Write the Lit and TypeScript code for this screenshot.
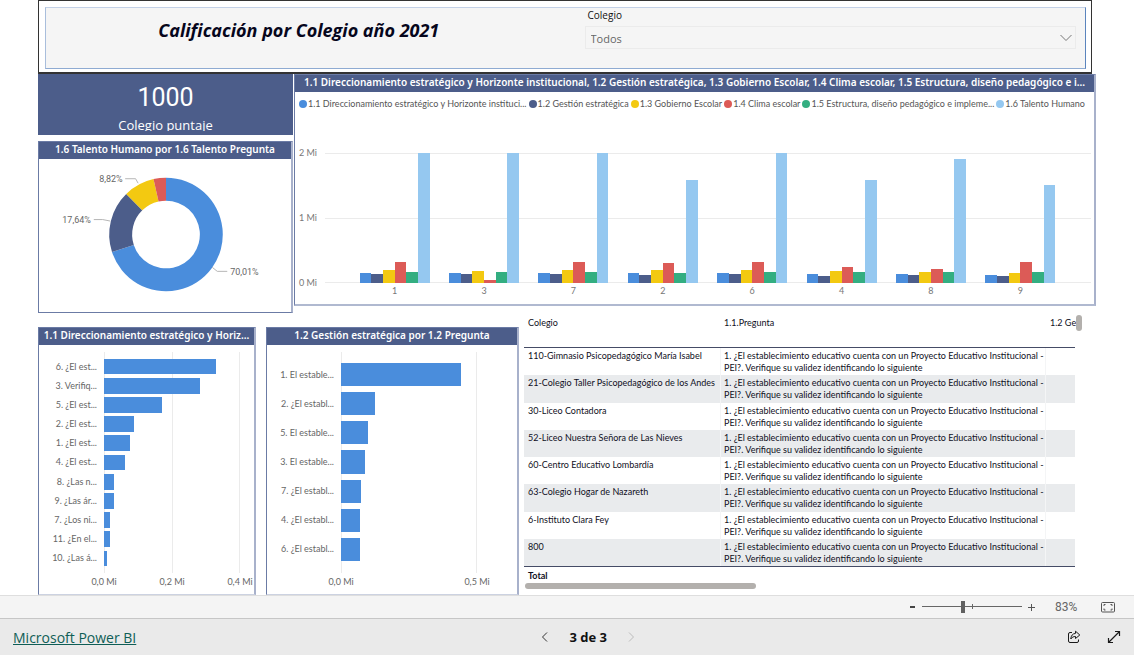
import { LitElement, html, css, svg } from "lit";
import { customElement } from "lit/decorators.js";

const SERIES = [
  { name: "1.1 Direccionamiento estratégico y Horizonte instituci...", color: "#4a8ddc" },
  { name: "1.2 Gestión estratégica", color: "#4c5d8a" },
  { name: "1.3 Gobierno Escolar", color: "#f3c911" },
  { name: "1.4 Clima escolar", color: "#dc5b57" },
  { name: "1.5 Estructura, diseño pedagógico e impleme...", color: "#33ae81" },
  { name: "1.6 Talento Humano", color: "#95c8f0" },
];

const GROUPS = [
  { label: "1", values: [0.15, 0.132, 0.197, 0.326, 0.171, 2.01] },
  { label: "3", values: [0.15, 0.132, 0.191, 0.047, 0.171, 2.01] },
  { label: "7", values: [0.15, 0.132, 0.197, 0.326, 0.171, 2.01] },
  { label: "2", values: [0.15, 0.129, 0.197, 0.316, 0.148, 1.6] },
  { label: "6", values: [0.15, 0.132, 0.197, 0.326, 0.171, 2.01] },
  { label: "4", values: [0.14, 0.109, 0.187, 0.253, 0.171, 1.6] },
  { label: "8", values: [0.135, 0.117, 0.176, 0.218, 0.171, 1.92] },
  { label: "9", values: [0.12, 0.114, 0.16, 0.326, 0.171, 1.52] },
];

const SLICES = [
  { share: 70.01, color: "#4a8ddc" },
  { share: 17.64, color: "#4c5d8a" },
  { share: 8.82, color: "#f3c911" },
  { share: 3.53, color: "#dc5b57" },
];

const DIRECCION = [
  ["6. ¿El est...", 0.329],
  ["3. Verifiq...", 0.281],
  ["5. ¿El est...", 0.17],
  ["2. ¿El est...", 0.089],
  ["1. ¿El est...", 0.075],
  ["4. ¿El est...", 0.063],
  ["8. ¿Las n...", 0.028],
  ["9. ¿Las ár...", 0.028],
  ["7. ¿Los ni...", 0.019],
  ["11. ¿En el...", 0.017],
  ["10. ¿Las á...", 0.01],
] as [string, number][];

const GESTION = [
  ["1. El estable...", 0.443],
  ["2. ¿El establ...", 0.126],
  ["5. El estable...", 0.1],
  ["3. El estable...", 0.089],
  ["7. ¿El establ...", 0.072],
  ["4. ¿El establ...", 0.07],
  ["6. ¿El establ...", 0.07],
] as [string, number][];

const SCHOOLS = [
  "110-Gimnasio Psicopedagógico María Isabel",
  "21-Colegio Taller Psicopedagógico de los Andes",
  "30-Liceo Contadora",
  "52-Liceo Nuestra Señora de Las Nieves",
  "60-Centro Educativo Lombardía",
  "63-Colegio Hogar de Nazareth",
  "6-Instituto Clara Fey",
  "800",
];

@customElement("donut-chart")
class DonutChart extends LitElement {
  static styles = css`
    :host { display: flex; justify-content: center; }
    text { font: 9px Roboto, "Noto Sans", sans-serif; fill: #666; }
    .leader { fill: none; stroke: #b5b5b5; }
  `;

  private arc(from: number, to: number) {
    const at = (r: number, p: number) => {
      const a = (p / 100) * Math.PI * 2;
      return `${(127.5 + r * Math.sin(a)).toFixed(2)} ${(75.5 - r * Math.cos(a)).toFixed(2)}`;
    };
    const large = to - from > 50 ? 1 : 0;
    return `M${at(57, from)}A57 57 0 ${large} 1 ${at(57, to)}L${at(34, to)}A34 34 0 ${large} 0 ${at(34, from)}Z`;
  }

  render() {
    let start = 0;
    return html`<svg width="253" height="153" viewBox="0 0 253 153" role="img" aria-label="1.6 Talento Humano">
      ${SLICES.map((s) => {
        const d = this.arc(start, start + s.share);
        start += s.share;
        return svg`<path d=${d} fill=${s.color}></path>`;
      })}
      <path class="leader" d="M86.5 19.5H97L99.5 24" />
      <path class="leader" d="M55 60.5H64L71.500 62" />
      <path class="leader" d="M174 108.500L179 112.500H189" />
      <text x="84" y="23" text-anchor="end">8,82%</text>
      <text x="52" y="64" text-anchor="end">17,64%</text>
      <text x="192" y="116">70,01%</text>
    </svg>`;
  }
}

@customElement("column-chart")
class ColumnChart extends LitElement {
  static styles = css`
    :host { display: flex; flex-direction: column; }
    .legend {
      display: flex; justify-content: space-between; padding: 6px 9px 0 4px; height: 12px;
      font-size: 9px; line-height: 12px; color: #555; white-space: nowrap;
    }
    .entry { display: flex; align-items: center; gap: 1px; }
    .dot { width: 8px; height: 8px; border-radius: 50%; flex: none; }
    .chart {
      display: grid; grid-template-columns: 26px 1fr; column-gap: 4px;
      padding: 43px 3px 0 0; font-size: 9px; line-height: 12px; color: #777;
    }
    .scale { display: flex; flex-direction: column; justify-content: space-between; margin: -6px 0; padding-left: 4px; white-space: nowrap; }
    .plot { display: grid; height: 130px; }
    .lines, .groups { grid-area: 1 / 1; }
    .lines { display: flex; flex-direction: column; justify-content: space-between; }
    .line { height: 1px; background: #ebebeb; }
    .groups, .names { display: grid; grid-template-columns: repeat(8, 1fr); padding: 0 26px 0 25px; }
    .group { display: grid; grid-template-columns: 19fr repeat(6, 23fr) 19fr; align-items: end; height: 130px; }
    .bar:first-child { grid-column: 2; }
    .names { grid-column: 2; padding-top: 2px; text-align: center; }
  `;

  render() {
    return html`
      <div class="legend">
        ${SERIES.map((s) => html`<span class="entry"><i class="dot" style="background:${s.color}"></i>${s.name}</span>`)}
      </div>
      <div class="chart">
        <div class="scale"><span>2 Mi</span><span>1 Mi</span><span>0 Mi</span></div>
        <div class="plot">
          <div class="lines"><i class="line"></i><i class="line"></i><i class="line"></i></div>
          <div class="groups">
            ${GROUPS.map((g) => html`<div class="group">
              ${g.values.map((v, i) => html`<i class="bar" style="height:${(v / 2.01) * 100}%;background:${SERIES[i].color}"></i>`)}
            </div>`)}
          </div>
        </div>
        <div class="names">${GROUPS.map((g) => html`<span>${g.label}</span>`)}</div>
      </div>
    `;
  }
}

@customElement("row-chart")
class RowChart extends LitElement {
  static properties = { rows: {}, max: { type: Number }, ticks: {} };
  declare rows: [string, number][];
  declare max: number;
  declare ticks: string[];

  static styles = css`
    :host {
      display: grid; grid-template-columns: var(--label-width) 1fr; padding: 7px 14px 0 0;
      font-size: 9px; line-height: 12px; color: #666;
    }
    .labels, .bars { display: grid; grid-auto-rows: 1fr; align-items: center; padding: 5px 0; }
    .labels { text-align: right; padding-right: 7px; white-space: nowrap; height: 211px; }
    .plot { display: grid; }
    .lines, .bars { grid-area: 1 / 1; }
    .lines { display: flex; justify-content: space-between; }
    .line { width: 1px; background: #ebebeb; }
    .bar { height: 82%; background: #4a8ddc; }
    .scale { grid-column: 2; display: flex; justify-content: space-between; margin: 3px -20px 0; white-space: nowrap; }
    .tick { width: 40px; text-align: center; }
    :host([wide]) { padding-right: 40px; }
    :host([wide]) .labels, :host([wide]) .bars { padding: 8px 0 9px; }
    :host([wide]) .labels { height: 204px; padding-right: 7px; }
    :host([wide]) .bar { height: 79%; }
  `;

  render() {
    return html`
      <div class="labels">${this.rows.map(([name]) => html`<span>${name}</span>`)}</div>
      <div class="plot">
        <div class="lines">${this.ticks.map(() => html`<i class="line"></i>`)}</div>
        <div class="bars">
          ${this.rows.map(([, value]) => html`<i class="bar" style="width:${(value / this.max) * 100}%"></i>`)}
        </div>
      </div>
      <div class="scale">${this.ticks.map((t) => html`<span class="tick">${t}</span>`)}</div>
    `;
  }
}

@customElement("school-table")
class SchoolTable extends LitElement {
  static styles = css`
    :host { display: grid; grid-template-columns: minmax(0, 1fr) 7px; align-items: start; font-size: 9px; line-height: 12px; color: #0f0f23; }
    table { width: 100%; height: 268px; table-layout: fixed; border-collapse: separate; border-spacing: 0; }
    th, td { padding: 2px 4px 1px; text-align: left; vertical-align: top; font-weight: 400; white-space: nowrap; }
    .school { width: 188px; }
    .extra { width: 25px; }
    thead th { height: 29px; border-bottom: 1px solid #454c66; }
    thead .extra { padding: 2px 0 1px 5px; }
    tbody td { white-space: pre; }
    tbody tr:nth-child(even) td { background: #e9ebed; }
    tbody td + td { border-left: 1px solid #f4f5f6; padding-left: 3px; }
    tfoot td { padding-top: 3px; border-top: 1px solid #454c66; font-weight: 700; }
    .thumb-y { width: 6px; height: 16px; margin: 0 0 0 1px; border-radius: 3px; background: #b3b0ad; }
    .thumb-x { width: 42%; height: 6px; margin-left: 1px; border-radius: 3px; background: #b3b0ad; }
  `;

  render() {
    return html`
      <table>
        <thead>
          <tr><th class="school">Colegio</th><th>1.1.Pregunta</th><th class="extra">1.2 Ge</th></tr>
        </thead>
        <tbody>
          ${SCHOOLS.map((s) => html`<tr><td>${s}</td><td>${"1. ¿El establecimiento educativo cuenta con un Proyecto Educativo Institucional -\nPEI?. Verifique su validez identificando lo siguiente"}</td><td></td></tr>`)}
        </tbody>
        <tfoot><tr><td>Total</td><td></td><td></td></tr></tfoot>
      </table>
      <div class="thumb-y"></div>
      <div class="thumb-x"></div>
    `;
  }
}

@customElement("app-root")
class AppRoot extends LitElement {
  static styles = css`
    :host {
      display: flex; flex-direction: column; min-height: 100vh; background: #fff;
      font-family: Lato, "Noto Sans", sans-serif; color: #252423;
    }
    .report { flex: 1; padding: 0 38px; }
    .banner { margin-right: 4px; padding: 6px 5px 3px 6px; border: 1px solid #333; border-bottom-width: 2px; }
    .banner-box {
      display: grid; grid-template-columns: 506fr 534fr; height: 60px; background: #f5f5f5;
      border: 1px solid; border-color: #c3d1e7 #5b84bd #8fabd2 #a9bedc;
    }
    .title { margin: 9px 0 0; text-align: center; font: italic 700 18px/26px "Open Sans", "Noto Sans", sans-serif; color: #06061c; white-space: nowrap; }
    .slicer { display: flex; flex-direction: column; padding: 0 9px 0 33px; }
    .slicer-label { padding: 1px 3px 4px; font: 10px/13px "Open Sans", "Noto Sans", sans-serif; color: #111; }
    .picker { display: grid; }
    .picker-select {
      grid-area: 1 / 1; appearance: none; height: 23px; padding: 2px 5px 0; border: 1px solid #ebebeb; border-radius: 0;
      background: transparent; font: 11px "Open Sans", "Noto Sans", sans-serif; color: #666;
    }
    .picker-arrow { grid-area: 1 / 1; justify-self: end; align-self: center; margin-right: 4px; pointer-events: none; }
    .top { display: grid; grid-template-columns: minmax(0, 255fr) minmax(0, 802fr); column-gap: 1px; }
    .side { display: flex; flex-direction: column; gap: 6px; margin-bottom: 14px; }
    .card { height: 61px; background: #4c5d8a; color: #fff; text-align: center; }
    .card-value { padding-top: 8px; font: 400 25px/32px Roboto, sans-serif; }
    .card-name { height: 17px; overflow: hidden; font: 13px/22px "Open Sans", "Noto Sans", sans-serif; }
    .panel { border: 1px solid #6b7ba5; border-right: 2px solid #a8b1cb; }
    .panel-title {
      margin: 0; padding: 0 4px 2px; background: #4c5d8a; color: #fff; font: 600 10px/15px "Noto Sans", "Open Sans", sans-serif;
      text-align: center; white-space: nowrap; overflow: hidden; text-overflow: ellipsis;
    }
    .columns { border-bottom: 2px solid #b0b9d0; height: 229px; }
    .bottom { display: grid; grid-template-columns: minmax(0, 218fr) minmax(0, 268fr) minmax(0, 558fr); padding-right: 14px; align-items: start; }
    .second { margin: 0 5px 0 10px; }
    .lower { border-bottom-color: #ccd2e1; height: 266px; }
    .dir { --label-width: 65px; }
    .ges { --label-width: 74px; }
    .grid { margin-top: -12px; }
    .zoombar {
      display: flex; align-items: center; justify-content: flex-end; height: 22px; padding-right: 18px;
      background: #f4f4f4; border-top: 1px solid #dedede; color: #555;
    }
    button { padding: 0; border: 0; background: none; color: inherit; display: flex; align-items: center; justify-content: center; }
    .step { width: 19px; height: 20px; }
    .zoom {
      appearance: none; width: 100px; height: 12px; margin: 0;
      background:
        linear-gradient(#666, #666) 50px 3px / 1px 5px no-repeat,
        linear-gradient(#666, #666) 0 5px / 100% 1px no-repeat;
    }
    .zoom::-webkit-slider-thumb { appearance: none; width: 4px; height: 12px; background: #606060; }
    .percent { width: 26px; margin: 0 20px 0 14px; font: 12px/16px Roboto, sans-serif; color: #666; }
    .footer {
      display: grid; grid-template-columns: 524fr auto 482fr; align-items: center; height: 36px; padding: 0 13px;
      background: #eaeaea; border-top: 1px solid #c6c6c6; font: 14px/18px "Open Sans", "Noto Sans", sans-serif;
    }
    .brand { justify-self: start; padding-top: 2px; color: #0f5e56; }
    .pager { display: flex; align-items: center; gap: 21px; font-size: 13px; font-weight: 700; color: #111; }
    .actions { display: flex; justify-content: flex-end; gap: 26px; color: #1a1a1a; }
  `;

  render() {
    return html`
      <main class="report">
        <header class="banner">
          <div class="banner-box">
            <h1 class="title">Calificación por Colegio año 2021</h1>
            <div class="slicer">
              <label class="slicer-label" for="colegio">Colegio</label>
              <div class="picker">
                <select class="picker-select" id="colegio"><option>Todos</option></select>
                <svg class="picker-arrow" width="12" height="8" viewBox="0 0 12 8" fill="none" stroke="#777"><path d="M.5 1L6 6.500L11.500 1" /></svg>
              </div>
            </div>
          </div>
        </header>
        <div class="top">
          <div class="side">
            <section class="card">
              <div class="card-value">1000</div>
              <div class="card-name">Colegio puntaje</div>
            </section>
            <section class="panel">
              <h2 class="panel-title">1.6 Talento Humano por 1.6 Talento Pregunta</h2>
              <donut-chart></donut-chart>
            </section>
          </div>
          <section class="panel columns">
            <h2 class="panel-title">1.1 Direccionamiento estratégico y Horizonte institucional, 1.2 Gestión estratégica, 1.3 Gobierno Escolar, 1.4 Clima escolar, 1.5 Estructura, diseño pedagógico e i...</h2>
            <column-chart></column-chart>
          </section>
        </div>
        <div class="bottom">
          <section class="panel lower">
            <h2 class="panel-title">1.1 Direccionamiento estratégico y Horiz...</h2>
            <row-chart class="dir" .rows=${DIRECCION} .max=${0.4} .ticks=${["0,0 Mi", "0,2 Mi", "0,4 Mi"]}></row-chart>
          </section>
          <section class="panel lower second">
            <h2 class="panel-title">1.2 Gestión estratégica por 1.2 Pregunta</h2>
            <row-chart wide class="ges" .rows=${GESTION} .max=${0.5} .ticks=${["0,0 Mi", "0,5 Mi"]}></row-chart>
          </section>
          <school-table class="grid"></school-table>
        </div>
      </main>
      <div class="zoombar">
        <button class="step" aria-label="Alejar"><svg width="5" height="2" viewBox="0 0 5 2"><path fill="#444" d="M0 0h5v2H0z" /></svg></button>
        <input class="zoom" type="range" min="0" max="100" value="41" aria-label="Zoom" />
        <button class="step" aria-label="Acercar"><svg width="7" height="7" viewBox="0 0 7 7"><path stroke="#555" d="M0 3.500H7M3.500 0V7" /></svg></button>
        <span class="percent">83%</span>
        <button aria-label="Ajustar a la página">
          <svg width="15" height="11" viewBox="0 0 15 11" fill="none" stroke="#555"><rect x=".5" y=".5" width="13" height="9.500" rx="1" /><path d="M3 4V2.500H4.500M9.500 2.500H11V4M11 6.500V8H9.500M4.500 8H3V6.500" /></svg>
        </button>
      </div>
      <footer class="footer">
        <a class="brand" href="#">Microsoft Power BI</a>
        <nav class="pager">
          <button aria-label="Anterior"><svg width="7" height="10" viewBox="0 0 7 10" fill="none" stroke="#333"><path d="M6 .5L1.500 5L6 9.500" /></svg></button>
          <span>3 de 3</span>
          <button aria-label="Siguiente"><svg width="7" height="10" viewBox="0 0 7 10" fill="none" stroke="#bbb"><path d="M1 .5L5.500 5L1 9.500" /></svg></button>
        </nav>
        <div class="actions">
          <button aria-label="Compartir">
            <svg width="14" height="14" viewBox="0 0 14 14" fill="none" stroke="currentColor" stroke-linejoin="round"><path d="M5 2.500H3A1.500 1.500 0 0 0 1.500 4V11A1.500 1.500 0 0 0 3 12.500H10A1.500 1.500 0 0 0 11.500 11V9.500" /><path d="M8.500 1.200L12.800 5L8.500 8.500V6.500C6.500 6.500 5 7.200 3.800 9C4 5.800 5.500 3.600 8.500 3.400Z" /></svg>
          </button>
          <button aria-label="Pantalla completa">
            <svg width="14" height="14" viewBox="0 0 14 14" fill="none" stroke="currentColor" stroke-width="1.200"><path d="M8 1.500H12.500V6M12.500 1.500L1.500 12.500M1.500 8V12.500H6" /></svg>
          </button>
        </div>
      </footer>
    `;
  }
}
